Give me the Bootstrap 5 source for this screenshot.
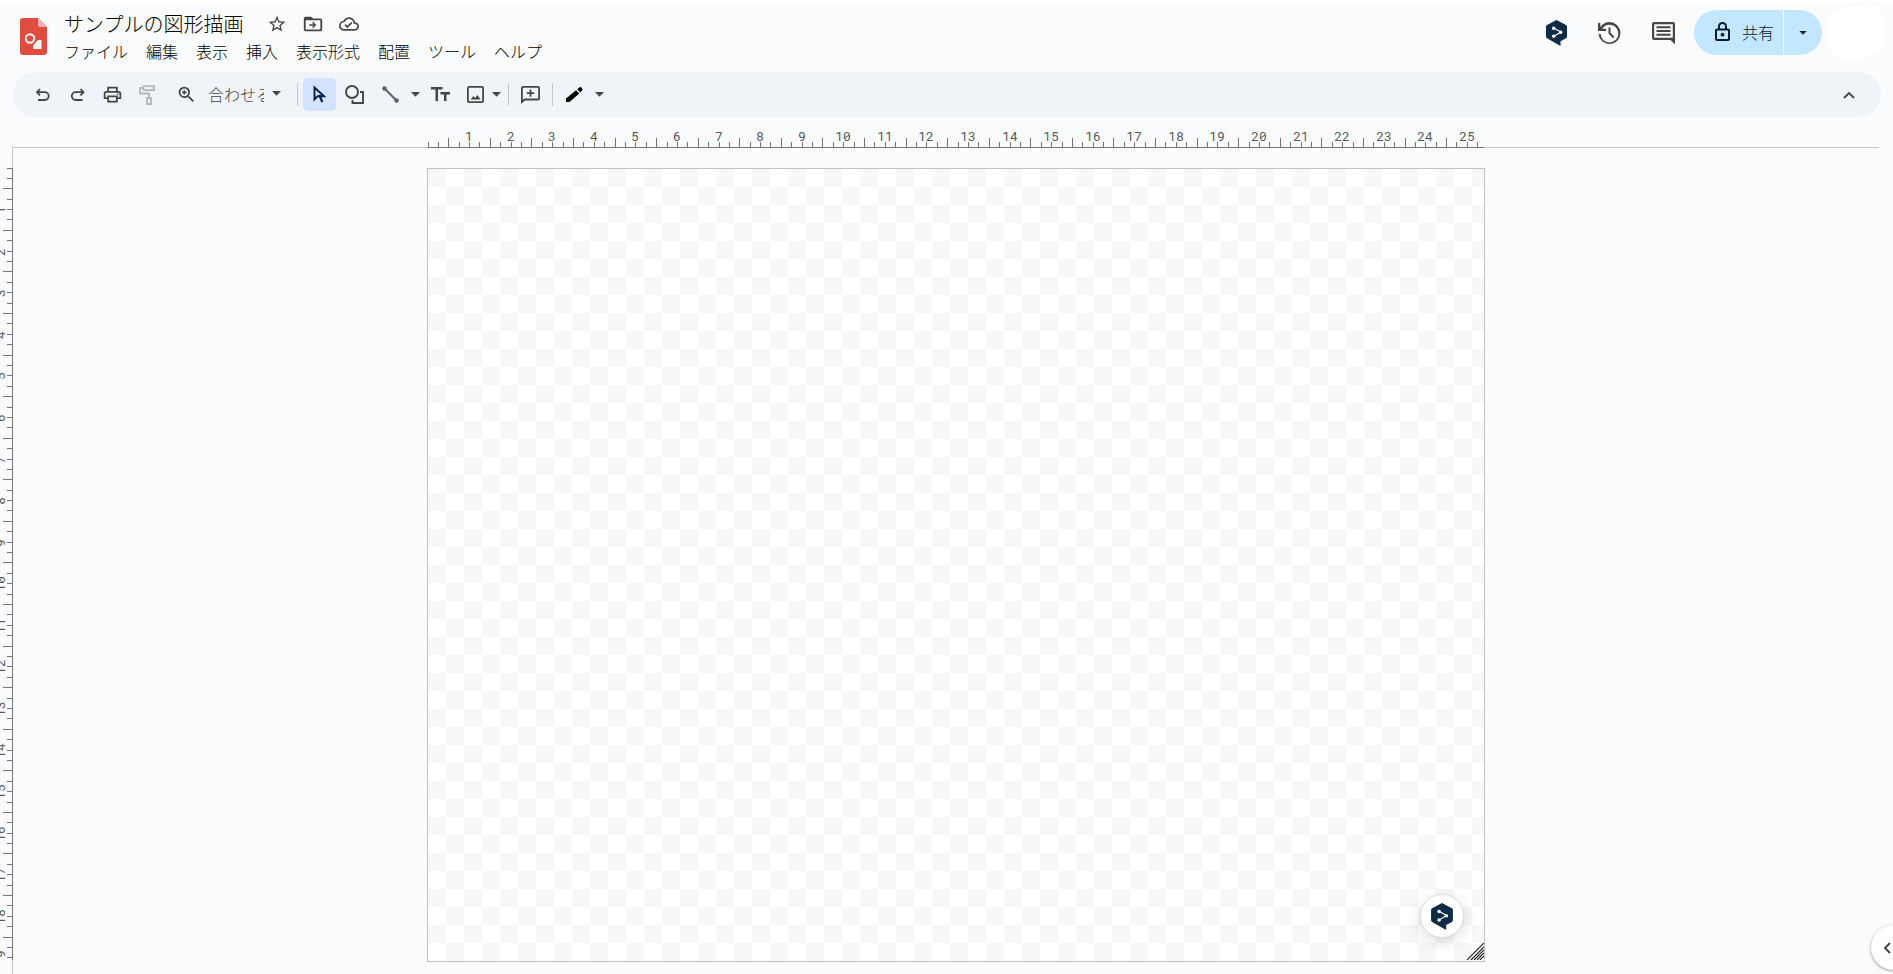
<!DOCTYPE html>
<html lang="ja">
<head>
<meta charset="utf-8">
<meta name="viewport" content="width=device-width, initial-scale=1">
<title>サンプルの図形描画</title>
<link href="https://cdn.jsdelivr.net/npm/bootstrap@5.3.0/dist/css/bootstrap.min.css" rel="stylesheet">
<style>
  body { background: #f9fbfd; border-top: 2px solid #fff; color: #1f1f1f; font-family: "Noto Sans CJK JP", sans-serif; font-weight: 300; font-size: 16px; line-height: 24px; }
  svg { display: block; fill: #444746; flex: none; }
  button { font-family: inherit; font-weight: inherit; color: inherit; border: 0; background: none; padding: 0; }
  .app-head { height: 70px; padding-left: 16px; }
  .doc-logo { padding-top: 16px; }
  .doc-info { padding-left: 17px; padding-top: 8px; }
  .doc-title { font-size: 20px; line-height: 28px; font-weight: 300; margin: 0; color: #000; }
  .icon-btn { width: 36px; height: 28px; display: flex; align-items: center; justify-content: center; }
  .menu-btn { padding: 0 8px; line-height: 24px; white-space: nowrap; color: #000; }
  .menu-row { gap: 2px; margin-left: -8px; margin-top: 1px; }
  .head-right { padding-top: 8px; padding-right: 8px; }
  .head-btn { width: 55px; height: 46px; display: flex; align-items: center; justify-content: center; }
  .head-btn.narrow { width: 50px; }
  .share-box { height: 45px; border-radius: 23px; overflow: hidden; gap: 1px; margin-left: 3px; }
  .share-main { background: #c2e7ff; color: #001d35; width: 89px; gap: 12px; padding-left: 12px; padding-bottom: 2px; }
  .share-more { background: #c2e7ff; width: 38px; }
  .share-box svg { fill: #001d35; }
  .blob { margin-top: -6px; }
  .tool-strip { height: 45px; background: #f0f4f9; border-radius: 23px; margin-left: 13px; margin-right: 12px; padding-left: 12px; padding-right: 15px; }
  .tool { width: 35px; height: 33px; display: flex; align-items: center; justify-content: center; border-radius: 5px; flex: none; }
  .tool.wide { width: 36px; }
  .tool.slim { width: 15px; }
  .tool.tuck { margin-left: -4px; }
  .tool.picked { width: 33px; background: #d3e3fd; margin-left: 5px; }
  .tool.picked svg { fill: #041e49; }
  .zoom-pick { padding-bottom: 2px; }
  .zoom-name { width: 56px; overflow: hidden; white-space: nowrap; color: #444746; text-align: left; }
  .bar-line { width: 1px; height: 23px; background: #c7c7c7; flex: none; }
  .ruler-x { height: 31px; margin-left: 12px; margin-right: 14px; padding-left: 21px; box-shadow: inset 0 -1px #c4c5c8; }
  .ruler-y { width: 13px; padding-top: 20px; box-shadow: inset -1px 0 #c4c5c8; overflow: hidden; flex: none; }
  .ruler-x text, .ruler-y text { font: 400 13px "Roboto Mono", "DejaVu Sans Mono", monospace; fill: #5a5a5a; text-anchor: middle; }
  .stage { padding-left: 6px; padding-top: 20px; overflow: hidden; }
  .paper { box-sizing: content-box; width: 1056px; height: 792px; border: 1px solid #c2c3c4; background: repeating-conic-gradient(#fff 0 25%, #f7f7f7 0 50%) 0 0 / 36px 36px; }
  .helper { right: 20px; bottom: 23px; width: 44px; height: 44px; border-radius: 50%; background: #fff; border: 1px solid #d9dee6; box-shadow: 0 4px 16px rgba(0,0,0,.14); display: flex; align-items: center; justify-content: center; }
  .grip { right: 0; bottom: 1px; }
  .side-open { right: -23px; bottom: 4px; width: 45px; height: 45px; border-radius: 50%; background: #fff; box-shadow: 0 1px 3px rgba(60,64,67,.55); padding-left: 12px; }
</style>
</head>
<body class="vh-100 overflow-hidden d-flex flex-column">

<svg width="0" height="0" class="position-absolute">
  <symbol id="bubble" viewBox="0 0 21 26"><path fill="#0f2b46" d="M10.500 0 20 5Q21 5.500 21 6.500V16.500Q21 17.600 20 18.200L14.500 21.300V26L1 18.200Q0 17.600 0 16.500V6.500Q0 5.500 1 5Z"/><path d="M7.500 8 15 12 7.500 16.500" fill="none" stroke="#fff" stroke-width="1.100"/><circle cx="7.700" cy="8.200" r="1.700" fill="#fff"/><circle cx="14.700" cy="12.200" r="1.700" fill="#fff"/><circle cx="7.700" cy="16.300" r="1.700" fill="#fff"/></symbol>
  <symbol id="caret" viewBox="0 0 9 5"><path d="M0 0h9L4.500 4.700z"/></symbol>
</svg>

<header class="app-head d-flex flex-shrink-0">
  <a href="#" class="doc-logo ms-1" aria-label="ホーム">
    <svg width="27" height="37" viewBox="0 0 27 37"><path fill="#e04c40" d="M3 0h15l9 9v25a3 3 0 0 1-3 3H3a3 3 0 0 1-3-3V3a3 3 0 0 1 3-3z"/><path fill="#f2b3ae" d="M18 0l9 9h-7a2 2 0 0 1-2-2z"/><circle cx="10" cy="20.500" r="4.200" fill="none" stroke="#f5f5f5" stroke-width="2"/><path fill="#f5f5f5" d="M21.500 22v9h-8.500v-3.500l5-5.500z"/></svg>
  </a>
  <div class="doc-info">
    <div class="d-flex align-items-center">
      <h1 class="doc-title">サンプルの図形描画</h1>
      <div class="d-flex ps-3">
        <button class="icon-btn" aria-label="スター"><svg width="20" height="20" viewBox="0 0 24 24"><path d="M22 9.240l-7.190-.620L12 2 9.190 8.630 2 9.240l5.460 4.730L5.820 21 12 17.270 18.180 21l-1.630-7.030L22 9.240zM12 15.400l-3.760 2.270 1-4.280-3.320-2.880 4.380-.380L12 6.100l1.710 4.040 4.380.380-3.320 2.880 1 4.280L12 15.400z"/></svg></button>
        <button class="icon-btn" aria-label="移動"><svg width="22" height="22" viewBox="0 0 24 24"><path d="M20 6h-8l-2-2H4c-1.100 0-2 .900-2 2v12c0 1.100.900 2 2 2h16c1.100 0 2-.900 2-2V8c0-1.100-.900-2-2-2zm0 12H4V8h16v10zm-7.900-1.400L11 15.500l1.600-1.600H8v-1.700h4.600L11 10.600l1.100-1.100 3.500 3.500-3.500 3.600z"/></svg></button>
        <button class="icon-btn" aria-label="保存状態"><svg width="20" height="20" viewBox="0 0 24 24"><path d="M19.350 10.040C18.670 6.590 15.640 4 12 4 9.110 4 6.610 5.640 5.360 8.040 2.340 8.360 0 10.910 0 14c0 3.310 2.690 6 6 6h13c2.760 0 5-2.240 5-5 0-2.640-2.050-4.780-4.650-4.960zM19 18H6c-2.210 0-4-1.790-4-4 0-2.050 1.530-3.760 3.560-3.970l1.070-.110.500-.950C8.080 7.140 9.940 6 12 6c2.620 0 4.880 1.860 5.390 4.430l.300 1.500 1.530.110c1.560.100 2.780 1.410 2.780 2.960 0 1.650-1.350 3-3 3zm-9-3.820l-2.090-2.090L6.500 13.500 10 17l6.010-6.010-1.410-1.410z"/></svg></button>
      </div>
    </div>
    <nav class="menu-row d-flex">
      <button class="menu-btn">ファイル</button>
      <button class="menu-btn">編集</button>
      <button class="menu-btn">表示</button>
      <button class="menu-btn">挿入</button>
      <button class="menu-btn">表示形式</button>
      <button class="menu-btn">配置</button>
      <button class="menu-btn">ツール</button>
      <button class="menu-btn">ヘルプ</button>
    </nav>
  </div>
  <div class="head-right d-flex ms-auto align-items-start">
    <button class="head-btn narrow" aria-label="翻訳"><svg width="21" height="26"><use href="#bubble"/></svg></button>
    <button class="head-btn" aria-label="変更履歴"><svg width="24" height="24" viewBox="0 0 24 24"><path d="M12.500 1C8.500 1 5.200 3 3.300 6V2H1v8h8V7.800H5.100A8.800 8.800 0 1 1 3.700 13H1.500A11 11 0 1 0 12.500 1zM11.500 6.500h2v5.300l4 4-1.400 1.400-4.600-4.600z"/></svg></button>
    <button class="head-btn" aria-label="コメント"><svg width="23" height="23" viewBox="0 0 23 23"><path fill-rule="evenodd" d="M2 0h19a2 2 0 0 1 2 2v20.500L18.500 18H2a2 2 0 0 1-2-2V2a2 2 0 0 1 2-2zm.2 2.200v13.600h18.600V2.200zM4.500 4.200h14v2h-14zm0 3.800h14v2h-14zm0 3.800h14v2h-14z"/></svg></button>
    <div class="share-box d-flex">
      <button class="share-main d-flex align-items-center justify-content-center"><svg width="15" height="19" viewBox="0 0 15 19"><path d="M2 6.500h1V4.500a4.500 4.500 0 0 1 9 0v2h1a2 2 0 0 1 2 2V17a2 2 0 0 1-2 2H2a2 2 0 0 1-2-2V8.500a2 2 0 0 1 2-2zm3 0h5v-2a2.500 2.500 0 0 0-5 0zm-3 2V17h11V8.500z"/><circle cx="7.500" cy="12.700" r="1.900"/></svg>共有</button>
      <button class="share-more d-flex align-items-center justify-content-center" aria-label="共有オプション"><svg width="8" height="4"><use href="#caret"/></svg></button>
    </div>
    <svg class="blob ms-1" width="59" height="57" viewBox="0 0 59 57"><path fill="#fff" d="M8 6Q14 3 24 5 34-1 44 0 57 3 58 18V34Q57 46 44 51 30 58 14 55 2 50 1 38V22Q2 10 8 6z"/></svg>
  </div>
</header>

<div class="tool-strip d-flex align-items-center flex-shrink-0" role="toolbar">
  <button class="tool" aria-label="元に戻す"><svg width="18" height="18" viewBox="0 0 18 18"><path d="M6 3 3 6.200l3 3.200M3.500 6.200h7.300a3.900 3.900 0 0 1 0 7.800H4" fill="none" stroke="#444746" stroke-width="1.800"/></svg></button>
  <button class="tool" aria-label="やり直し"><svg width="18" height="18" viewBox="0 0 18 18"><path d="M11.500 3l3 3.200-3 3.200M14 6.200H6.700a3.900 3.900 0 0 0 0 7.800h6.800" fill="none" stroke="#444746" stroke-width="1.800"/></svg></button>
  <button class="tool" aria-label="印刷"><svg width="21" height="21" viewBox="0 0 24 24"><path d="M19 8h-1V3H6v5H5c-1.660 0-3 1.340-3 3v6h4v4h12v-4h4v-6c0-1.660-1.340-3-3-3zM8 5h8v3H8V5zm8 14H8v-4h8v4zm2-4v-2H6v2H4v-4c0-.550.450-1 1-1h14c.550 0 1 .450 1 1v4h-2z"/><circle cx="18" cy="11.500" r="1"/></svg></button>
  <button class="tool" aria-label="書式の貼り付け" disabled><svg width="17" height="20" viewBox="0 0 17 20"><path d="M4.500 1.200H15v4H4.500zM4.500 3H1v5.500h9V13M8 13h4v6H8z" fill="none" stroke="#b4b6b9" stroke-width="1.800"/></svg></button>
  <button class="tool ms-1" aria-label="ズーム"><svg width="21" height="21" viewBox="0 0 24 24"><path d="M15.500 14h-.790l-.280-.270A6.470 6.470 0 0 0 16 9.500 6.500 6.500 0 1 0 9.500 16c1.610 0 3.090-.590 4.230-1.570l.270.280v.790l5 4.990L20.490 19l-4.990-5zm-6 0C7.010 14 5 11.990 5 9.500S7.010 5 9.500 5 14 7.010 14 9.500 11.990 14 9.500 14zm-.900-7h1.800v1.700H12v1.800h-1.600V12H8.600v-1.500H7V8.700h1.600z"/></svg></button>
  <button class="zoom-pick d-flex align-items-center ps-1"><span class="zoom-name">合わせる</span><svg class="ms-2" width="9" height="5"><use href="#caret"/></svg></button>
  <span class="bar-line ms-3"></span>
  <button class="tool picked" aria-label="選択"><svg width="13" height="19" viewBox="0 0 13 19"><path fill="none" stroke="#041e49" stroke-width="1.900" d="M1.500 2.500v12l3.200-3.300h6.300z"/><path d="M5.300 10.500 7.300 9.600l3 7-2 .9z"/></svg></button>
  <button class="tool wide" aria-label="図形"><svg width="19" height="19" viewBox="0 0 19 19"><circle cx="7" cy="7" r="6" fill="none" stroke="#444746" stroke-width="1.900"/><path d="M15 7h3v11H7.500v-3" fill="none" stroke="#444746" stroke-width="1.900"/></svg></button>
  <button class="tool wide" aria-label="線"><svg width="17" height="17" viewBox="0 0 17 17"><path d="M2.500 2.500l12 12" stroke="#5f6368" stroke-width="2"/><circle cx="2.500" cy="2.500" r="2.300" fill="#5f6368"/><circle cx="14.500" cy="14.500" r="2.300" fill="#5f6368"/></svg></button>
  <button class="tool slim" aria-label="線の種類"><svg width="9" height="5"><use href="#caret"/></svg></button>
  <button class="tool" aria-label="テキスト"><svg width="19" height="15" viewBox="0 0 19 15"><path d="M0 0h11.500v2.500H7V14H4.500V2.500H0zM9.500 5H19v2.400h-3.500V14H13V7.400H9.500z"/></svg></button>
  <button class="tool" aria-label="画像"><svg width="17" height="17" viewBox="0 0 17 17"><path fill-rule="evenodd" d="M2 0h13a2 2 0 0 1 2 2v13a2 2 0 0 1-2 2H2a2 2 0 0 1-2-2V2a2 2 0 0 1 2-2zm-.2 1.800v13.400h13.400V1.800zM3.800 13.500l2.500-3.500 1.800 2 2.400-3 3 4.500z"/></svg></button>
  <button class="tool slim tuck" aria-label="画像の種類"><svg width="9" height="5"><use href="#caret"/></svg></button>
  <span class="bar-line ms-1"></span>
  <button class="tool ms-1" aria-label="コメントを追加"><svg width="19" height="18" viewBox="0 0 19 18"><path fill-rule="evenodd" d="M2 0h15a2 2 0 0 1 2 2v10.500a2 2 0 0 1-2 2H4L0 18V2a2 2 0 0 1 2-2zm-.2 1.800v12l1.500-1.200h13.900V1.800zM8.600 3.500h1.800v2.800h2.800V8h-2.800v2.800H8.600V8H5.800V6.300h2.800z"/></svg></button>
  <span class="bar-line ms-1"></span>
  <button class="tool ms-1" aria-label="ペン"><svg width="17" height="15" viewBox="0 0 17 15"><path fill="#000" d="M0 15v-3.500L10 3.200l3.300 3.300L3.500 15zM11.200 2.300l2.200-1.900a1.500 1.500 0 0 1 2 .1l.8.900a1.400 1.400 0 0 1 0 1.900l-1.900 2.200z"/></svg></button>
  <button class="tool slim" aria-label="ペンの種類"><svg width="9" height="5"><use href="#caret"/></svg></button>
  <button class="tool ms-auto" aria-label="メニューを隠す"><svg width="12" height="8" viewBox="0 0 12 8"><path d="M1 7l5-5 5 5" fill="none" stroke="#444746" stroke-width="1.800"/></svg></button>
</div>

<div class="ruler-x d-flex justify-content-center align-items-end flex-shrink-0">
  <svg id="rulerX" width="1056" height="31" role="img" aria-label="横ルーラー"></svg>
</div>
<div class="d-flex flex-grow-1 overflow-hidden">
  <div class="ruler-y">
    <svg id="rulerY" width="13" height="792" role="img" aria-label="縦ルーラー"></svg>
  </div>
  <main class="stage flex-grow-1 d-flex justify-content-center align-items-start">
    <div class="paper position-relative flex-shrink-0">
      <button class="helper position-absolute" aria-label="翻訳"><svg width="22" height="27"><use href="#bubble"/></svg></button>
      <svg class="grip position-absolute" width="17" height="17" viewBox="0 0 17 17"><path d="M0 17 17 0M4 17 17 4M7 17 17 7M10 17 17 10M13 17l4-4" stroke="#222" stroke-width="1.200"/></svg>
    </div>
  </main>
</div>
<button class="side-open position-fixed" aria-label="サイドパネルを表示"><svg width="8" height="12" viewBox="0 0 8 12"><path d="M7 1 2 6l5 5" fill="none" stroke="#444746" stroke-width="2"/></svg></button>

<script src="https://cdn.jsdelivr.net/npm/bootstrap@5.3.0/dist/js/bootstrap.bundle.min.js"></script>
<script>
  // Ticks every quarter centimetre, taller at each half, numbered at each whole one.
  const cm = 1056 / 25.4;
  function rule(id, length, vertical) {
    let d = '', labels = '';
    for (let i = 0; i * cm / 4 < length; i++) {
      const p = Math.floor(i * cm / 4), h = i % 4 === 2 ? 9 : 5;
      d += vertical ? `M${12 - h} ${p}h${h}v1h-${h}z` : `M${p} ${30 - h}v${h}h1v-${h}z`;
      if (i && i % 4 === 0) {
        labels += vertical
          ? `<text transform="translate(5 ${p + 1}) rotate(-90)">${i / 4}</text>`
          : `<text x="${p}" y="24">${i / 4}</text>`;
      }
    }
    d += vertical ? `M12 0h1v${length}h-1z` : `M0 30h${length}v1H0z`;
    document.getElementById(id).innerHTML = `<path fill="#747678" shape-rendering="crispEdges" d="${d}"/>${labels}`;
  }
  rule('rulerX', 1056, false);
  rule('rulerY', 792, true);
</script>
</body>
</html>
